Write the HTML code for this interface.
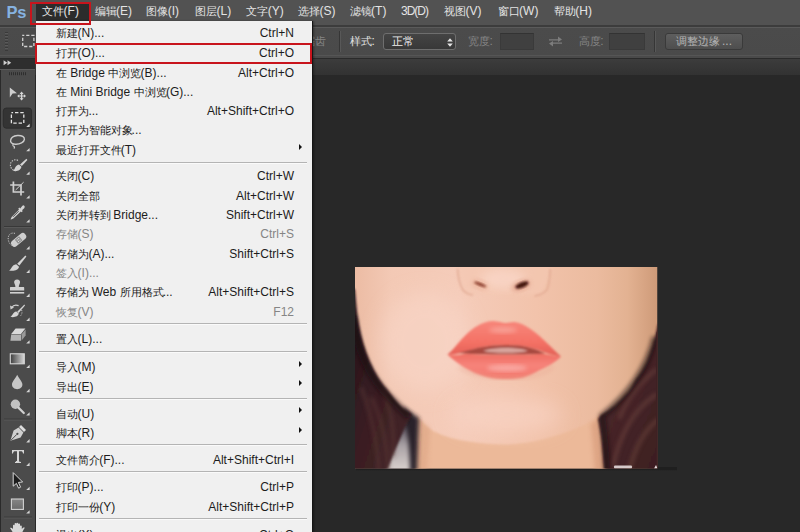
<!DOCTYPE html>
<html lang="zh">
<head>
<meta charset="utf-8">
<title>Photoshop</title>
<style>
html,body{margin:0;padding:0;}
body{width:800px;height:532px;overflow:hidden;background:#282828;position:relative;font-family:"Liberation Sans",sans-serif;font-size:12px;}
#root{position:absolute;left:0;top:0;width:800px;height:532px;overflow:hidden;background:#282828;}
.abs{position:absolute;}
#menubar{left:0;top:0;width:800px;height:25px;background:#525252;}
#optbar{left:0;top:25px;width:800px;height:33px;background:linear-gradient(#3c3c3c 0,#3c3c3c 1.7px,#5a5a5a 1.7px,#5a5a5a 2.6px,#4b4b4b 2.6px,#4a4a4a 30.5px,#555 30.5px,#555 31.5px,#4a4a4a 31.5px);}

#tabstrip{left:0;top:57.5px;width:800px;height:17px;background:linear-gradient(#2a2a2a 0,#2a2a2a 1.3px,#3c3c3c 1.3px,#323232 100%);}
.mi{position:absolute;top:3px;height:16px;line-height:16px;color:#e4e4e4;white-space:nowrap;font-size:12px;}
.c{display:inline-block;font-size:11px;letter-spacing:0;vertical-align:baseline;white-space:nowrap;overflow:visible;}
/* toolbar */
#tools{left:0;top:59px;width:35px;height:473px;background:#4b4b4b;border-left:1px solid #2a2a2a;box-sizing:border-box;}
#toolhead{left:0;top:59px;width:35px;height:10px;background:#2e2e2e;}
/* dropdown menu */
#menu{left:36px;top:21px;width:275.5px;height:520px;background:#f0f0f0;box-shadow:1px 0 0 #161616,2px 0 2px rgba(0,0,0,.35);}
.row{position:absolute;left:20px;height:16px;line-height:16px;color:#1c1c1c;white-space:nowrap;font-size:12px;}
.sc{position:absolute;right:17.5px;height:16px;line-height:16px;color:#1c1c1c;white-space:nowrap;font-size:12px;text-align:right;}
.dis{color:#858585;}
.sep{position:absolute;left:3px;width:268px;height:1px;background:#b4b4b4;border-bottom:1px solid #fafafa;}
.arr{position:absolute;left:262.6px;width:0;height:0;border-left:3.6px solid #111;border-top:3.2px solid transparent;border-bottom:3.2px solid transparent;}
.red{position:absolute;border:2px solid #c8141c;box-sizing:border-box;}

#pslogo{left:6.5px;top:2px;font-size:16.5px;font-weight:bold;color:#86b2e0;letter-spacing:-0.3px;line-height:20px;}
#filetab{left:36px;top:3px;width:53px;height:17.5px;background:#2c2c2c;}
#grip0{left:5px;top:32px;width:3px;height:19px;background:repeating-linear-gradient(#3a3a3a 0 1px,#5a5a5a 1px 2px,transparent 2px 3px);}
.ol{height:16px;line-height:16px;color:#e2e2e2;white-space:nowrap;font-size:12px;}
.dim{color:#858585;}
.vsep{top:31px;width:1px;height:21px;background:#363636;border-right:1px solid #585858;}
#dd{left:382.5px;top:32.5px;width:73px;height:17.5px;box-sizing:border-box;border:1px solid #6e6e6e;border-radius:3px;background:linear-gradient(#444,#383838);color:#f0f0f0;line-height:15px;padding-left:8px;}
.inp{top:33px;width:34px;height:16.5px;box-sizing:border-box;background:#404040;border:1px solid #3a3a3a;border-top-color:#333;}
#btn{left:664.5px;top:33px;width:78px;height:16.5px;box-sizing:border-box;border:1px solid #3a3a3a;border-radius:3px;background:linear-gradient(#5e5e5e,#4e4e4e);color:#b4b4b4;line-height:14px;padding-left:10px;white-space:nowrap;}

#pshadow{left:356px;top:467px;width:321px;height:4px;background:linear-gradient(#1f1f1f 0,#1f1f1f 2.6px,#252525 2.6px,#262626 100%);}
</style>
</head>
<body>
<div id="root">
<div id="menubar" class="abs"></div>
<div id="optbar" class="abs"></div>
<div id="tabstrip" class="abs"></div>
<div id="tools" class="abs"></div>
<div id="toolhead" class="abs"></div>

<div class="abs" id="pslogo">Ps</div>
<div class="abs" id="filetab"></div>
<div class="mi" style="left:42px"><span class="c" style="width:21.6px">文件</span>(F)</div>
<div class="mi" style="left:94.5px"><span class="c" style="width:21.6px">编辑</span>(E)</div>
<div class="mi" style="left:146.2px"><span class="c" style="width:21.6px">图像</span>(I)</div>
<div class="mi" style="left:195px"><span class="c" style="width:21.6px">图层</span>(L)</div>
<div class="mi" style="left:246.2px"><span class="c" style="width:21.6px">文字</span>(Y)</div>
<div class="mi" style="left:298px"><span class="c" style="width:21.6px">选择</span>(S)</div>
<div class="mi" style="left:349.5px"><span class="c" style="width:21.6px">滤镜</span>(T)</div>
<div class="mi" style="left:444px"><span class="c" style="width:21.6px">视图</span>(V)</div>
<div class="mi" style="left:497.5px"><span class="c" style="width:21.6px">窗口</span>(W)</div>
<div class="mi" style="left:553.7px"><span class="c" style="width:21.6px">帮助</span>(H)</div>
<div class="mi" style="left:401px;letter-spacing:-1px">3D(D)</div>
<div class="abs" id="grip0"></div>
<svg class="abs" style="left:21px;top:34px" width="15" height="14" viewBox="0 0 15 14"><rect x="1.7" y="1.3" width="11.2" height="11.2" fill="none" stroke="#d2d2d2" stroke-width="1.3" stroke-dasharray="3.2 1.9" stroke-dashoffset="1.6"/></svg>
<div class="abs ol dim" style="left:312px;top:33px"><span class="c" style="width:14px;overflow:hidden;direction:rtl">锯齿</span></div>
<div class="abs vsep" style="left:339px"></div>
<div class="abs ol" style="left:350px;top:33px"><span class="c" style="width:21.6px">样式</span>:</div>
<div class="abs" id="dd"><span class="c" style="width:21.6px">正常</span></div>
<svg class="abs" style="left:445.5px;top:36.5px" width="8" height="11" viewBox="0 0 8 11"><path d="M4 1.2 L6.8 4.4 H1.2 Z M4 9.8 L6.8 6.6 H1.2 Z" fill="#e6e6e6"/></svg>
<div class="abs ol dim" style="left:468px;top:33px"><span class="c" style="width:21.6px">宽度</span>:</div>
<div class="abs inp" style="left:499.5px"></div>
<svg class="abs" style="left:548px;top:35px" width="15" height="13" viewBox="0 0 15 13"><path d="M1 4.2 H10 V1.6 L14 4.6 L10 7 V5.6 H1 Z M14 8.8 H5 V11.4 L1 8.4 L5 6 V7.4 H14 Z" fill="#7c7c7c"/></svg>
<div class="abs ol dim" style="left:578.7px;top:33px"><span class="c" style="width:21.6px">高度</span>:</div>
<div class="abs inp" style="left:609px;width:36px"></div>
<div class="abs vsep" style="left:654px"></div>
<div class="abs" id="btn"><span class="c" style="width:43.2px">调整边缘</span> ...</div>
<svg class="abs" style="left:0;top:59px" width="36" height="473" viewBox="0 59 36 473">
<g fill="#d0d0d0">
<path d="M3.6 60.3 L7.3 62.8 L3.6 65.3 Z M7.5 60.3 L11.2 62.8 L7.5 65.3 Z"/>
</g>
<rect x="0" y="69" width="35" height="1" fill="#5c5c5c"/>
<g fill="#2e2e2e"><rect x="9" y="72.2" width="1" height="3"/><rect x="11" y="72.2" width="1" height="3"/><rect x="13" y="72.2" width="1" height="3"/><rect x="15" y="72.2" width="1" height="3"/><rect x="17" y="72.2" width="1" height="3"/><rect x="19" y="72.2" width="1" height="3"/><rect x="21" y="72.2" width="1" height="3"/><rect x="23" y="72.2" width="1" height="3"/><rect x="25" y="72.2" width="1" height="3"/></g>
<!-- selected marquee bg -->
<rect x="3.3" y="108" width="28.3" height="20.2" rx="3" fill="#343434" stroke="#2a2a2a" stroke-width=".8"/>
<g fill="#d6d6d6"><path d="M29.6 123.7 V127.1 H26.2 Z"/><path d="M29.6 147.9 V151.3 H26.2 Z"/><path d="M29.6 171.4 V174.8 H26.2 Z"/><path d="M29.6 195.2 V198.6 H26.2 Z"/><path d="M29.6 219.2 V222.6 H26.2 Z"/><path d="M29.6 246.0 V249.4 H26.2 Z"/><path d="M29.6 269.6 V273.0 H26.2 Z"/><path d="M29.6 293.5 V296.9 H26.2 Z"/><path d="M29.6 317.6 V321.0 H26.2 Z"/><path d="M29.6 340.2 V343.6 H26.2 Z"/><path d="M29.6 364.7 V368.1 H26.2 Z"/><path d="M29.6 388.8 V392.2 H26.2 Z"/><path d="M29.6 412.2 V415.6 H26.2 Z"/><path d="M29.6 439.0 V442.4 H26.2 Z"/><path d="M29.6 462.6 V466.0 H26.2 Z"/><path d="M29.6 486.7 V490.1 H26.2 Z"/><path d="M29.6 510.2 V513.6 H26.2 Z"/></g>
<!-- move -->
<path d="M9.8 87.4 L17 93.2 L12.6 93.6 L9.8 97.6 Z" fill="#cfcfcf"/>
<path d="M21.6 91.6 L23.6 94 H22.3 V95.4 H23.9 V94.2 L26 96 L23.9 97.8 V96.6 H22.3 V98.2 H23.6 L21.6 100.4 L19.6 98.2 H20.9 V96.6 H19.3 V97.8 L17.2 96 L19.3 94.2 V95.4 H20.9 V94 H19.6 Z" fill="#d8d8d8"/>
<!-- marquee -->
<rect x="11.4" y="112.6" width="12.4" height="10.6" fill="none" stroke="#e4e4e4" stroke-width="1.3" stroke-dasharray="3.4 1.9" stroke-dashoffset="1.7"/>
<!-- lasso -->
<path d="M17.5 135.5 C22 135.2 24.6 137 24.4 139.4 C24.2 142.2 20 144.4 15.4 144.2 C12 144 10.2 142.4 10.6 140.4 C11 137.8 13.6 135.8 17.5 135.5 Z" fill="none" stroke="#cdcdcd" stroke-width="1.4"/>
<path d="M13.6 143.6 C12.4 144.6 12.6 146 14 146.4 C14.8 146.8 14.6 147.8 13.8 148.4" fill="none" stroke="#cdcdcd" stroke-width="1.2"/>
<!-- quick selection -->
<path d="M18 160.4 C14.6 158.6 10.6 160.8 10.4 164.6 C10.2 168 12.6 170.4 15.4 170.6" fill="none" stroke="#c8c8c8" stroke-width="1.1" stroke-dasharray="1.4 1.2"/>
<path d="M26.4 158.8 L27.4 160 L21.8 166 L20 164.4 Z" fill="#d4d4d4"/>
<path d="M19 164.6 L21.4 166.8 C21 170.4 16.6 172 13 170.8 C15.2 169.8 14.8 165.4 19 164.6 Z" fill="#d4d4d4"/>
<!-- crop -->
<path d="M13.4 181.6 V192 H24.2 M10.2 185 H21 V195.6" fill="none" stroke="#d0d0d0" stroke-width="1.7"/>
<path d="M23.6 182.2 L15.6 190" stroke="#d0d0d0" stroke-width="1"/>
<!-- eyedropper -->
<path d="M23.4 205.2 C24.8 205.4 25.2 207 24.2 208.2 L22 210.2 L22.8 211 L21.6 212.2 L20.8 211.4 L13.4 218.6 L11 219.6 L10.6 219.2 L11.8 216.8 L19 209.6 L18.2 208.8 L19.4 207.6 L20.2 208.4 L22.2 206 C22.6 205.4 23 205.2 23.4 205.2 Z" fill="#d2d2d2"/>
<path d="M18.6 211.2 L13 216.8" stroke="#4b4b4b" stroke-width="1"/>
<!-- sep -->
<rect x="4" y="226" width="28" height="1" fill="#383838"/><rect x="4" y="227" width="28" height="1" fill="#585858"/>
<!-- healing -->
<path d="M15 233.4 C11 232 7.8 235 8.2 239 C8.4 242 10 244.4 12 245.6" fill="none" stroke="#c4c4c4" stroke-width="1" stroke-dasharray="1.2 1.2"/>
<g transform="rotate(-40 18.6 240)"><rect x="10" y="236.6" width="17.4" height="6.8" rx="3.2" fill="#cfcfcf"/><rect x="15.8" y="237.4" width="5.6" height="5.2" fill="#8e8e8e"/><circle cx="17.6" cy="239" r=".6" fill="#e8e8e8"/><circle cx="19.6" cy="239" r=".6" fill="#e8e8e8"/><circle cx="17.6" cy="241" r=".6" fill="#e8e8e8"/><circle cx="19.6" cy="241" r=".6" fill="#e8e8e8"/></g>
<!-- brush -->
<path d="M25.4 255.4 L26.4 256.6 L19.4 265.6 L17.2 263.8 Z" fill="#d4d4d4"/>
<path d="M16.2 264.2 L19 266.8 C18.6 270.4 13 271.6 9 270.4 C11.6 269.6 11.6 264.8 16.2 264.2 Z" fill="#d4d4d4"/>
<!-- stamp -->
<path d="M17.1 279.4 C19.2 279.4 20.4 281 20 282.8 C19.6 284.4 18.8 285.4 18.8 287 H23.4 C24 287 24.2 287.4 24.2 288 V290.4 H10 V288 C10 287.4 10.2 287 10.8 287 H15.4 C15.4 285.4 14.6 284.4 14.2 282.8 C13.8 281 15 279.4 17.1 279.4 Z" fill="#d0d0d0"/>
<rect x="10" y="292" width="14.2" height="1.6" fill="#d0d0d0"/>
<!-- history brush -->
<path d="M24.4 304.4 L25 305.4 L18.6 313 L17.2 311.8 Z" fill="#d4d4d4"/>
<path d="M16.4 311.4 L18.8 313.6 C18.4 316.6 14 317.8 10.2 316.8 C12.6 316 12.6 312 16.4 311.4 Z" fill="#d4d4d4"/>
<path d="M18.6 305.6 C16 304.6 13 305.4 11.6 307.6" fill="none" stroke="#cfcfcf" stroke-width="1.2"/>
<path d="M10 305.6 L10.6 309.4 L14 307.6 Z" fill="#cfcfcf"/>
<path d="M21.6 310 C22.4 312 22 314.4 20.4 316" fill="none" stroke="#bdbdbd" stroke-width="1" stroke-dasharray="1.2 1.2"/>
<!-- eraser -->
<path d="M15.6 328.6 H25.4 L21 334 H11.2 Z" fill="#dadada"/>
<path d="M11.2 334.6 H21 V340.8 H10.4 Z" fill="#b4b4b4"/>
<path d="M21.6 334.2 L25.6 329.4 V335.4 L21.6 340.6 Z" fill="#9a9a9a"/>
<!-- gradient -->
<defs><linearGradient id="tg" x1="0" x2="1"><stop offset="0" stop-color="#3c3c3c"/><stop offset="1" stop-color="#d8d8d8"/></linearGradient>
<linearGradient id="rg" x1="0" y1="0" x2="0" y2="1"><stop offset="0" stop-color="#868686"/><stop offset="1" stop-color="#6a6a6a"/></linearGradient></defs>
<rect x="10.3" y="353.8" width="14" height="10" fill="url(#tg)" stroke="#d6d6d6" stroke-width="1.1"/>
<!-- blur -->
<path d="M17.2 374.8 C18.6 378.4 22.4 381.4 22.4 384.6 C22.4 387.4 20 389.2 17.2 389.2 C14.4 389.2 12 387.4 12 384.6 C12 381.4 15.8 378.4 17.2 374.8 Z" fill="#c6c6c6"/>
<!-- dodge -->
<circle cx="15.4" cy="404.2" r="4.7" fill="#c2c2c2"/>
<path d="M18.4 407.6 L23.8 413" stroke="#d0d0d0" stroke-width="2.2" stroke-linecap="round"/>
<!-- sep -->
<rect x="4" y="418.6" width="28" height="1" fill="#383838"/><rect x="4" y="419.6" width="28" height="1" fill="#585858"/>
<!-- pen -->
<path d="M21 425 L26 430 L24 432 L19 427 Z" fill="#dcdcdc"/>
<path d="M18.6 427.6 L23.4 432.4 L20.6 437.4 L10.4 440.8 L13.6 430.4 Z" fill="#cfcfcf"/>
<path d="M11 440.2 L16.8 434.4" stroke="#4b4b4b" stroke-width="1"/><circle cx="17.4" cy="433.8" r="1.1" fill="#4b4b4b"/>
<!-- T -->
<path d="M12 450 H24 V453.4 H23 C22.8 451.8 22.2 451.2 20.6 451.2 H19 V460.6 C19 461.8 19.4 462 21 462 V463 H15 V462 C16.6 462 17 461.8 17 460.6 V451.2 H15.4 C13.8 451.2 13.2 451.8 13 453.4 H12 Z" fill="#d6d6d6"/>
<!-- path selection -->
<path d="M13.2 472.6 L22.6 482 L18.4 482.4 L20.6 487.2 L18.6 488.2 L16.4 483.4 L13.2 486.2 Z" fill="#1c1c1c" stroke="#d8d8d8" stroke-width="1"/>
<!-- rectangle -->
<rect x="11.4" y="499" width="12" height="10.4" fill="url(#rg)" stroke="#d2d2d2" stroke-width="1.1"/>
<!-- sep -->
<rect x="4" y="516.6" width="28" height="1" fill="#383838"/><rect x="4" y="517.6" width="28" height="1" fill="#585858"/>
<!-- hand -->
<path d="M12.6 532 C11.6 530 10.6 529 10 528 C10.8 527.2 12 527.8 13 529 V525.4 C13 524.4 14.6 524.4 14.6 525.4 V523.8 C14.6 522.8 16.4 522.8 16.4 523.8 V523.4 C16.4 522.4 18.2 522.4 18.2 523.4 V524 C18.2 523.2 20 523.2 20 524.2 V526 C20 525.2 21.8 525.2 21.8 526.2 V529 C22.6 527.6 24 527 24.8 527.8 C24 529 23 530.4 22.4 532 Z" fill="#d8d8d8"/>
</svg>
<div class="abs" id="pshadow"></div>
<svg class="abs" id="photo" style="left:355px;top:267px" width="302.5" height="201.5" viewBox="0 0 302.5 201.5">
<defs>
<linearGradient id="skin" x1="0" y1="0" x2="1" y2="0"><stop offset="0" stop-color="#ecbca4"/><stop offset=".12" stop-color="#f3c9b5"/><stop offset=".35" stop-color="#f5ccba"/><stop offset=".6" stop-color="#f2c3ab"/><stop offset=".8" stop-color="#ebbb9f"/><stop offset=".9" stop-color="#e3b292"/><stop offset="1" stop-color="#ce9a78"/></linearGradient>
<linearGradient id="hairL" x1="0" y1="0" x2="1" y2="1"><stop offset="0" stop-color="#20101a"/><stop offset=".5" stop-color="#3a1e22"/><stop offset="1" stop-color="#46262a"/></linearGradient>
<linearGradient id="hairR" x1="0" y1="0" x2="1" y2="1"><stop offset="0" stop-color="#200d13"/><stop offset=".35" stop-color="#48262a"/><stop offset="1" stop-color="#3c1e20"/></linearGradient>
<linearGradient id="lipU" x1="0" y1="0" x2="0" y2="1"><stop offset="0" stop-color="#f7877b"/><stop offset=".6" stop-color="#f47165"/><stop offset="1" stop-color="#e26056"/></linearGradient>
<linearGradient id="lipD" x1="0" y1="0" x2="0" y2="1"><stop offset="0" stop-color="#f06e63"/><stop offset=".45" stop-color="#f6837a"/><stop offset="1" stop-color="#f3786d"/></linearGradient>
<filter id="b1" x="-20%" y="-20%" width="140%" height="140%"><feGaussianBlur stdDeviation="0.9"/></filter>
<filter id="b2" x="-20%" y="-20%" width="140%" height="140%"><feGaussianBlur stdDeviation="2.2"/></filter>
<filter id="b4" x="-30%" y="-30%" width="160%" height="160%"><feGaussianBlur stdDeviation="5"/></filter>
<filter id="b8" x="-40%" y="-40%" width="180%" height="180%"><feGaussianBlur stdDeviation="10"/></filter>
<linearGradient id="gapg" x1="0" y1="0" x2="0" y2="1"><stop offset="0" stop-color="#4a4250"/><stop offset=".45" stop-color="#a8a0a4"/><stop offset="1" stop-color="#ddd5d1"/></linearGradient>
<clipPath id="pc"><rect x="0" y="0" width="302.5" height="201.5"/></clipPath>
</defs>
<g clip-path="url(#pc)">
<rect width="302.5" height="201.5" fill="url(#skin)"/>
<!-- cheek highlights -->
<ellipse cx="70" cy="75" rx="45" ry="50" fill="#f9d8ca" opacity=".55" filter="url(#b8)"/>
<!-- neck -->
<path d="M62 149 C68 156 72 160 78 164 C90 170 102 173 113.6 174.5 C126 176.5 140 177.5 151.5 177.5 C165 177 178 175 189 172 C203 168 216 164 227 159 C234 156 240 152 247 146 L252 210 L60 210 Z" fill="#ecb999" filter="url(#b1)"/>
<path d="M63 151 L75 162 L72 205 L60 205 Z" fill="#dfa888" opacity=".7" filter="url(#b2)"/>
<path d="M247 148 L236 157 L240 205 L252 205 Z" fill="#d89c7c" opacity=".7" filter="url(#b2)"/>
<!-- chin light -->
<ellipse cx="152" cy="148" rx="55" ry="18" fill="#f9d6c8" opacity=".6" filter="url(#b8)"/>
<!-- gap left -->
<path d="M48 140 L64 151 L62 205 L30 205 L40 172 L46 155 Z" fill="#2a2029" filter="url(#b2)"/>
<path d="M50 156 C53 166 55 185 55 205 L30 205 C36 188 43 170 50 156 Z" fill="url(#gapg)" filter="url(#b2)"/>
<!-- hair left -->
<path d="M-5 18 L0 22.7 C1 34 2 46 3.8 56.8 C6 70 10 83 15 94.7 C20 106 26 116 34 125 C39 131 44 138 50 143 L57 148 C54 152 52 156 50 160 C46 169 41 180 37 190 L31 206 L-5 206 Z" fill="url(#hairL)" filter="url(#b1)"/>
<path d="M6 120 C14 140 22 170 24 205 M16 130 C26 150 32 175 33 205 M28 122 C36 142 40 162 38 190" stroke="#623c3a" stroke-width="3" fill="none" opacity=".6" filter="url(#b2)"/>
<path d="M-2 50 C2 84 14 110 34 130 L54 150" stroke="#160810" stroke-width="7" fill="none" opacity=".6" filter="url(#b2)"/>
<!-- hair right -->
<path d="M308 52 L302.5 58 C300 72 296 84 291.6 94.7 C288 102 285 107 281 112 C278 117 276 121 272.7 125 C268 130 264 134 260 138 C255 142 251 145 246 148 L243 152 C244.5 160 245.5 166 246.5 174 L249.4 206 L308 206 Z" fill="url(#hairR)" filter="url(#b1)"/>
<path d="M264 152 C272 132 286 114 302 102 M258 200 C264 170 278 142 302 127 M274 204 C280 180 290 162 304 152" stroke="#704640" stroke-width="4" fill="none" opacity=".6" filter="url(#b2)"/>
<path d="M300 70 C293 100 274 128 247 149 C250 164 251 184 252 204" stroke="#180810" stroke-width="6" fill="none" opacity=".6" filter="url(#b2)"/>
<path d="M303 60 L301.4 66 L301 80 V202 H303 Z" fill="#3e2023"/>
<!-- nose -->
<path d="M102 -4 C103 10 106 20 113 26 C128 31 140 25 150 27 C160 25 172 31 186 27 C192 20 195 10 196 -4 Z" fill="#f4c8b2" opacity=".7" filter="url(#b2)"/>
<ellipse cx="148" cy="12" rx="22" ry="10" fill="#fad8ca" opacity=".7" filter="url(#b4)"/>
<path d="M102.5 2 C103 10 105 18 108 23 C111 26.5 114 27.5 118 28" stroke="#dba088" stroke-width="1.5" fill="none" opacity=".75" filter="url(#b1)"/>
<path d="M195.3 2 C195 10 194 18 191.8 23 C188 27 184 28.5 179.5 29" stroke="#dba088" stroke-width="1.5" fill="none" opacity=".7" filter="url(#b1)"/>
<ellipse cx="125" cy="17.6" rx="8.5" ry="4.5" transform="rotate(20 125 17.6)" fill="#e6a890" opacity=".55" filter="url(#b2)"/>
<ellipse cx="166" cy="18.6" rx="10" ry="5" transform="rotate(-20 166 18.6)" fill="#dc9880" opacity=".6" filter="url(#b2)"/>
<ellipse cx="125.2" cy="17.4" rx="6.4" ry="1.7" transform="rotate(22 125.2 17.4)" fill="#8e4230" filter="url(#b1)"/>
<ellipse cx="167" cy="18" rx="7" ry="2.7" transform="rotate(-22 167 18)" fill="#45160f" filter="url(#b1)"/>
<!-- lips -->
<g filter="url(#b1)">
<path d="M92.4 87.6 C98 83 102 77 107.3 71.5 C113 65.5 118 61 124.8 57.6 C130 55 134 53.8 138.8 54 C144 54.4 147 55.8 151 56 C154 55.8 156 54.8 159.8 55 C166 56 170 58.5 175.5 62 C182 66.5 188 72 193 77 C198 82 202 86 206.1 89.4 C198 88.5 192 86.5 186 84 C176 80 164 78 151 78 C138 78 124 80 114 83.5 C106 86.5 99 88 92.4 87.6 Z" fill="url(#lipU)"/>
<path d="M103.8 86 C112 83.5 124 80 138 78.5 C146 77.8 156 77.8 164 78.5 C176 80 184 83.5 190 86.5 C176 88 120 88 103.8 86 Z" fill="#a84840"/>
<path d="M128 83.8 C136 81.5 144 80.8 151 80.8 C158 80.8 166 81.5 173 83.8 C166 86.5 136 86.5 128 83.8 Z" fill="#d8a49c"/>
<path d="M92.4 87.6 C98 89 104 88 110 86.8 C130 88.5 170 88.5 188 86.8 C194 88 200 89 206.1 89.4 C201.8 94 194 99 186 102.5 C180 106 174 109 168.5 110.4 C162 111.6 157 112 151 112 C145 112 139 111.6 133.5 110.4 C127 109 121 107 116 104.3 C110 101.5 100 95 92.4 87.6 Z" fill="url(#lipD)"/>
</g>
<ellipse cx="152" cy="101" rx="20" ry="3.5" fill="#fab4ae" opacity=".75" filter="url(#b2)"/>
<ellipse cx="148" cy="63" rx="14" ry="3" fill="#fab6ac" opacity=".6" filter="url(#b2)"/>
<path d="M104 100 C124 114 178 116 198 100" stroke="#e8a490" stroke-width="3" fill="none" opacity=".45" filter="url(#b2)"/>
<!-- watermark bits -->
<rect x="259" y="198.5" width="18" height="3" rx="1" fill="#e6dcdc" opacity=".9"/>
<path d="M299 201.5 L301 198 L302.5 201.5 Z" fill="#e6dcdc"/>
</g>
</svg>
<div id="menu" class="abs">
<div class="row" style="top:4.0px"><span class="c" style="width:21.6px">新建</span>(N)...</div>
<div class="sc" style="top:4.0px">Ctrl+N</div>
<div class="row" style="top:24.0px"><span class="c" style="width:21.6px">打开</span>(O)...</div>
<div class="sc" style="top:24.0px">Ctrl+O</div>
<div class="row" style="top:43.5px"><span class="c" style="width:10.8px">在</span> Bridge <span class="c" style="width:32.4px">中浏览</span>(B)...</div>
<div class="sc" style="top:43.5px">Alt+Ctrl+O</div>
<div class="row" style="top:62.6px"><span class="c" style="width:10.8px">在</span> Mini Bridge <span class="c" style="width:32.4px">中浏览</span>(G)...</div>
<div class="row" style="top:82.0px"><span class="c" style="width:32.4px">打开为</span>...</div>
<div class="sc" style="top:82.0px">Alt+Shift+Ctrl+O</div>
<div class="row" style="top:101.3px"><span class="c" style="width:75.6px">打开为智能对象</span>...</div>
<div class="row" style="top:121.0px"><span class="c" style="width:64.8px">最近打开文件</span>(T)</div>
<div class="arr" style="top:122.5px"></div>
<div class="sep" style="top:140.8px"></div>
<div class="row" style="top:147.4px"><span class="c" style="width:21.6px">关闭</span>(C)</div>
<div class="sc" style="top:147.4px">Ctrl+W</div>
<div class="row" style="top:166.8px"><span class="c" style="width:43.2px">关闭全部</span></div>
<div class="sc" style="top:166.8px">Alt+Ctrl+W</div>
<div class="row" style="top:186.0px"><span class="c" style="width:54.0px">关闭并转到</span> Bridge...</div>
<div class="sc" style="top:186.0px">Shift+Ctrl+W</div>
<div class="row dis" style="top:205.3px"><span class="c" style="width:21.6px">存储</span>(S)</div>
<div class="sc dis" style="top:205.3px">Ctrl+S</div>
<div class="row" style="top:224.6px"><span class="c" style="width:32.4px">存储为</span>(A)...</div>
<div class="sc" style="top:224.6px">Shift+Ctrl+S</div>
<div class="row dis" style="top:244.0px"><span class="c" style="width:21.6px">签入</span>(I)...</div>
<div class="row" style="top:263.3px"><span class="c" style="width:32.4px">存储为</span> Web <span class="c" style="width:43.2px">所用格式</span>...</div>
<div class="sc" style="top:263.3px">Alt+Shift+Ctrl+S</div>
<div class="row dis" style="top:282.5px"><span class="c" style="width:21.6px">恢复</span>(V)</div>
<div class="sc dis" style="top:282.5px">F12</div>
<div class="sep" style="top:302.1px"></div>
<div class="row" style="top:310.2px"><span class="c" style="width:21.6px">置入</span>(L)...</div>
<div class="sep" style="top:329.9px"></div>
<div class="row" style="top:338.4px"><span class="c" style="width:21.6px">导入</span>(M)</div>
<div class="arr" style="top:339.9px"></div>
<div class="row" style="top:357.8px"><span class="c" style="width:21.6px">导出</span>(E)</div>
<div class="arr" style="top:359.3px"></div>
<div class="sep" style="top:376.5px"></div>
<div class="row" style="top:384.8px"><span class="c" style="width:21.6px">自动</span>(U)</div>
<div class="arr" style="top:386.3px"></div>
<div class="row" style="top:404.3px"><span class="c" style="width:21.6px">脚本</span>(R)</div>
<div class="arr" style="top:405.8px"></div>
<div class="sep" style="top:422.9px"></div>
<div class="row" style="top:431.0px"><span class="c" style="width:43.2px">文件简介</span>(F)...</div>
<div class="sc" style="top:431.0px">Alt+Shift+Ctrl+I</div>
<div class="sep" style="top:450.2px"></div>
<div class="row" style="top:458.3px"><span class="c" style="width:21.6px">打印</span>(P)...</div>
<div class="sc" style="top:458.3px">Ctrl+P</div>
<div class="row" style="top:477.5px"><span class="c" style="width:43.2px">打印一份</span>(Y)</div>
<div class="sc" style="top:477.5px">Alt+Shift+Ctrl+P</div>
<div class="sep" style="top:497.0px"></div>
<div class="row" style="top:505.6px"><span class="c" style="width:21.6px">退出</span>(X)</div>
<div class="sc" style="top:505.6px">Ctrl+Q</div>
</div>
<div class="red" style="left:29.5px;top:1.5px;width:61.5px;height:23px"></div>
<div class="red" style="left:35px;top:43px;width:276.5px;height:21px"></div>
</div>
</body>
</html>
